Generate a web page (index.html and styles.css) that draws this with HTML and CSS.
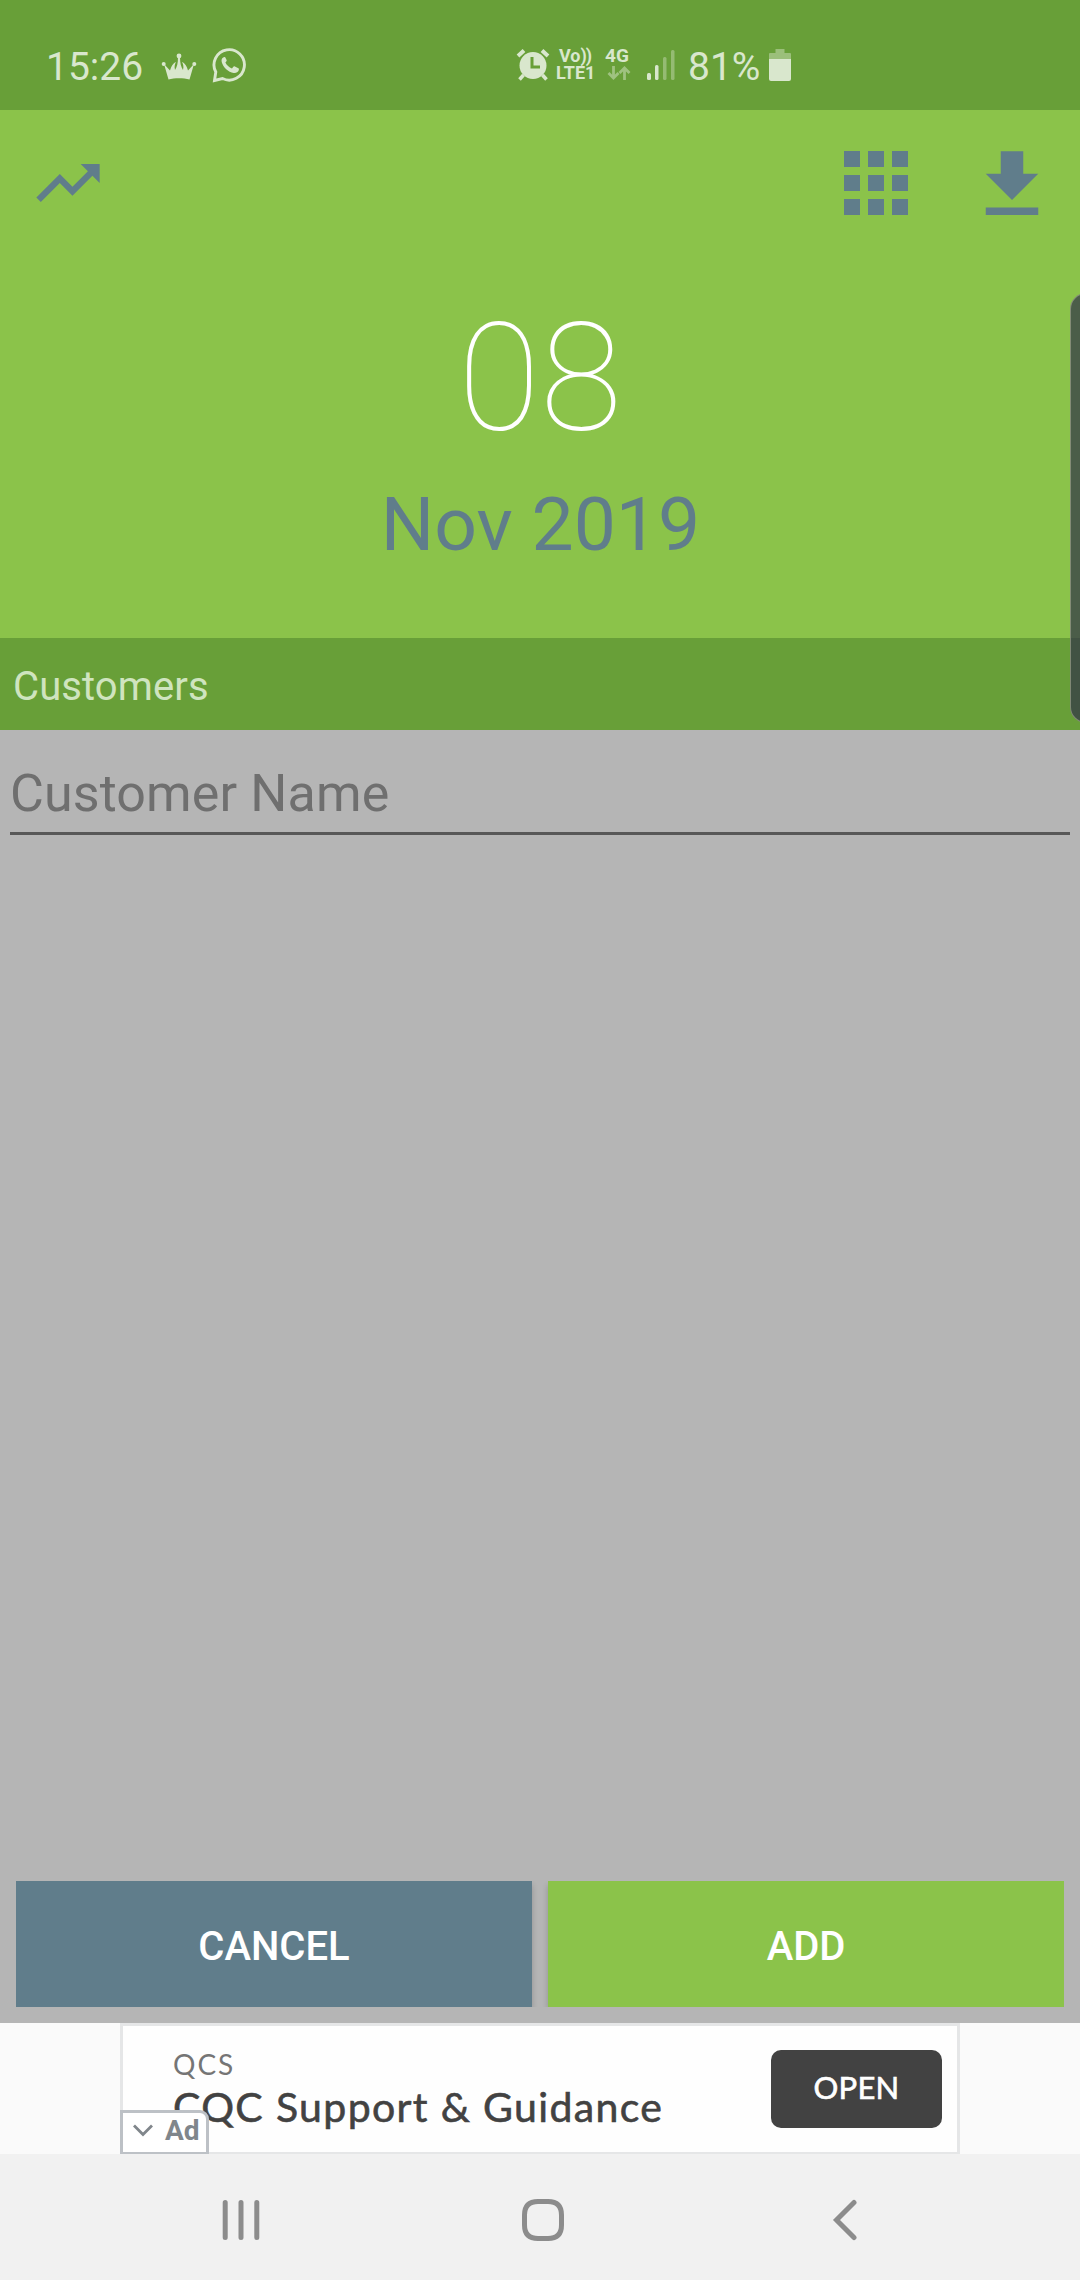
FILE: index.html
```html
<!DOCTYPE html>
<html lang="en">
<head>
<meta charset="utf-8">
<title>Customers</title>
<link rel="stylesheet" href="styles.css">
</head>
<body>
<div class="screen">
  <div class="status">
    <span class="clock">15:26</span>
    <svg class="crown" width="36" height="28" viewBox="0 0 36 28" fill="currentColor">
      <circle cx="2.7" cy="11" r="2"/><circle cx="18" cy="3" r="2.4"/><circle cx="33.3" cy="11" r="2"/>
      <path d="M3 11l6 6.500C10 14 12 10 15 9c-1 2-2 4-1 8 2-3 3-7 3-13h2c0 6 1 10 3 13 1-4 0-6-1-8 3 1 5 5 6 8.500L33 11l-4.500 15.500c-6-1.800-15-1.800-21 0z"/>
    </svg>
    <svg class="whatsapp" width="36" height="36" viewBox="0 0 36 36">
      <path d="M3.800 25A15.200 15.200 0 1 1 10.500 31.500L2.500 33.500z" fill="none" stroke="currentColor" stroke-width="2.900"/>
      <path d="M12.500 10c-2 .3-3.500 2.300-2.800 5 1.600 5.500 6.500 10 12 11 2.500.3 5-1 5.200-3.500.1-1-.2-1.200-1-1.600l-3-1.500c-.8-.4-1.100-.2-1.600.4l-1.300 1.600c-3-1.200-5.300-3.200-6.600-6 .9-1 1.500-1.600 1.200-2.500l-1.300-2.500c-.2-.4-.4-.5-.8-.4z" fill="currentColor"/>
    </svg>
    <svg class="alarm" width="34" height="34" viewBox="0 0 34 34">
      <g stroke="currentColor" stroke-width="4" fill="none"><path d="M2 8l6-5.500M32 8l-6-5.500"/><path d="M7.500 27l-4 4.500M26.500 27l4 4.500" stroke-width="3.500"/></g>
      <circle cx="17" cy="17.500" r="13.500" fill="currentColor"/>
      <path d="M16 9v10h8" fill="none" stroke="#689f38" stroke-width="3"/>
    </svg>
    <span class="volte"><span>Vo<i>))</i></span><span>LTE1</span></span>
    <span class="network"><span>4G</span>
      <svg width="24" height="16" viewBox="0 0 24 16" fill="none" stroke="currentColor" stroke-width="2.800"><path d="M6.500 1v12M1.500 8l5 5 5-5M17.500 15V3M12.500 8l5-5 5 5"/></svg>
    </span>
    <svg class="signal" width="28" height="31" viewBox="0 0 28 31" fill="currentColor">
      <rect x="0" y="23" width="4" height="7" rx="1.500"/><rect x="8" y="15" width="3.500" height="15" rx="1.500"/>
      <g opacity=".4"><rect x="16" y="7" width="3.500" height="23" rx="1.500"/><rect x="24" y="0" width="3.500" height="30" rx="1.500"/></g>
    </svg>
    <span class="percent">81%</span>
    <svg class="battery" width="22" height="33" viewBox="0 0 22 33" fill="currentColor">
      <path d="M1 4h5.500V0h9v4H21q1 0 1 1v5H0V5q0-1 1-1z" opacity=".45"/><path d="M0 10h22v20q0 2-2 2H2q-2 0-2-2z"/>
    </svg>
  </div>

  <header class="header">
    <div class="toolbar">
      <svg class="trend" width="76" height="76" viewBox="0 0 24 24" fill="currentColor"><path d="M16 6l2.290 2.290-4.880 4.880-4-4L2 16.590 3.410 18l6-6 4 4 6.300-6.290L22 12V6z"/></svg>
      <svg class="apps" width="96" height="96" viewBox="0 0 24 24" fill="currentColor"><path d="M4 8h4V4H4v4zm6 12h4v-4h-4v4zm-6 0h4v-4H4v4zm0-6h4v-4H4v4zm6 0h4v-4h-4v4zm6-10v4h4V4h-4zm-6 4h4V4h-4v4zm6 6h4v-4h-4v4zm0 6h4v-4h-4v4z"/></svg>
      <svg class="download" width="90" height="90" viewBox="0 0 24 24" fill="currentColor"><path d="M19 9h-4V3H9v6H5l7 7 7-7zM5 18v2h14v-2H5z"/></svg>
    </div>
    <div class="day">08</div>
    <div class="month">Nov 2019</div>
  </header>

  <div class="section">Customers</div>

  <main class="content">
    <input class="name" type="text" placeholder="Customer Name">
    <div class="actions">
      <button class="btn cancel">CANCEL</button>
      <button class="btn add">ADD</button>
    </div>
  </main>

  <div class="ad-strip">
    <div class="ad">
      <div class="ad-copy"><span class="ad-brand">QCS</span><span class="ad-title">CQC Support &amp; Guidance</span></div>
      <button class="ad-open">OPEN</button>
      <div class="ad-badge"><svg width="20" height="13" viewBox="0 0 20 13" fill="none" stroke="currentColor" stroke-width="2.800"><path d="M1 1.500l9 9 9-9"/></svg><span>Ad</span></div>
    </div>
  </div>

  <nav class="nav">
    <svg class="recents" width="38" height="42" viewBox="0 0 38 42" stroke="currentColor" stroke-width="5" stroke-linecap="round"><path d="M3.200 3.500v35M19 3.500v35M34.800 3.500v35"/></svg>
    <svg class="home" width="42" height="42" viewBox="0 0 42 42" fill="none" stroke="currentColor" stroke-width="5"><path d="M16 2.500h10q13.500 0 13.500 13.500v10q0 13.500-13.500 13.500H16Q2.500 39.500 2.500 26V16Q2.500 2.500 16 2.500z"/></svg>
    <svg class="back" width="26" height="42" viewBox="0 0 26 42" fill="none" stroke="currentColor" stroke-width="5" stroke-linecap="round"><path d="M22 3.500L4.500 21 22 38.500"/></svg>
  </nav>
  <div class="edge-handle"></div>
</div>
</body>
</html>
```
FILE: styles.css
```css
* { box-sizing: border-box; }
body { margin: 0; font-family: Roboto, "Noto Sans", sans-serif; }
button, input { font-family: inherit; border: 0; border-radius: 0; padding: 0; margin: 0; }
svg { display: block; flex: none; }

.screen { position: relative; width: 1080px; height: 2280px; display: flex; flex-direction: column; overflow: hidden; background: #b5b5b5; }

.status { height: 110px; flex: none; display: flex; align-items: center; padding: 23px 0 0 46px; background: #689f38; color: #d9e7cd; white-space: nowrap; }
.clock { width: 115px; font-size: 39px; line-height: 46px; }
.crown { margin-right: 15px; }
.whatsapp { margin-right: 268px; margin-top: -3px; }
.alarm { margin-right: 6px; margin-top: -4px; }
.volte { width: 49px; display: flex; flex-direction: column; font-size: 18px; font-weight: 700; line-height: 17px; margin-top: -5px; }
.volte span:first-child { padding-left: 3px; }
.volte i { font-style: normal; letter-spacing: -1px; }
.network { width: 42px; display: flex; flex-direction: column; gap: 1px; font-size: 19px; font-weight: 700; line-height: 17px; margin-top: -5px; }
.network svg { margin-left: 2px; color: #9fc280; }
.signal { margin-right: 13px; margin-top: -3px; }
.percent { width: 81px; font-size: 39px; line-height: 46px; }
.battery { margin-top: -3px; }

.header { height: 528px; flex: none; background: #8bc34a; color: #607d8b; text-align: center; }
.toolbar { height: 150px; display: flex; align-items: center; padding: 0 23px 0 30px; }
.trend { margin-right: auto; margin-top: -5px; }
.apps { margin-right: 43px; margin-top: -4px; }
.day { height: 238px; line-height: 238px; font-size: 150px; font-weight: 100; color: #fff; }
.month { height: 52px; line-height: 52px; padding-left: 1px; font-size: 75px; }

.section { height: 92px; flex: none; padding: 5px 0 0 13px; line-height: 88px; font-size: 40px; letter-spacing: .1px; background: #689f38; color: #cfe4bf; }

.content { height: 1293px; flex: none; display: flex; flex-direction: column; align-items: stretch; }
.name { height: 105px; margin: 0 10px; padding-top: 24px; background: transparent; border-bottom: 3px solid #585858; font-size: 52px; letter-spacing: .12px; color: #333; outline: 0; }
.name::placeholder { color: #6f6f6f; opacity: 1; }
.actions { margin: auto 16px 16px; height: 126px; display: flex; gap: 16px; overflow: hidden; }
.btn { flex: 1; padding-top: 5px; font-size: 40px; font-weight: 500; color: #fff; box-shadow: 0 4px 6px rgba(0,0,0,.2); }
.cancel { background: #607d8b; }
.add { background: #8bc34a; }

.ad-strip { height: 131px; flex: none; display: flex; justify-content: center; background: #fafafa; }
.ad { position: relative; width: 840px; display: flex; align-items: center; justify-content: space-between; padding: 0 15px 0 50px; border: 3px solid #e5e6e7; border-bottom-width: 2px; background: #fefefe; font-family: Lato, sans-serif; }
.ad-copy { display: flex; flex-direction: column; padding-bottom: 3px; }
.ad-brand { font-size: 28px; line-height: 38px; letter-spacing: 2px; color: #757575; }
.ad-title { font-size: 41px; line-height: 48px; letter-spacing: 1.35px; color: #424242; -webkit-text-stroke: .6px #424242; white-space: nowrap; }
.ad-open { width: 171px; height: 78px; padding-bottom: 4px; border-radius: 10px; background: #424242; color: #fff; font: 400 31px Lato, sans-serif; letter-spacing: .2px; -webkit-text-stroke: .6px #fff; }
.ad-badge { position: absolute; left: -3px; bottom: -2px; width: 89px; height: 44px; display: flex; align-items: center; gap: 12px; padding: 0 0 4px 10px; border: 3px solid #bdc1c6; border-bottom-width: 2px; border-top-right-radius: 9px; background: #fff; color: #80868b; font: 700 28px/34px Roboto, sans-serif; }

.nav { height: 126px; flex: none; display: flex; align-items: center; padding: 6px 0 0 222px; background: #f1f1f1; color: #8c8c8c; }
.recents { margin-right: 262px; }
.home { margin-right: 268px; }

.edge-handle { position: absolute; left: 1070px; top: 293px; width: 34px; height: 430px; border: 1px solid rgba(170,170,150,.6); border-radius: 16px; background: rgba(49,50,72,.7); }
```
